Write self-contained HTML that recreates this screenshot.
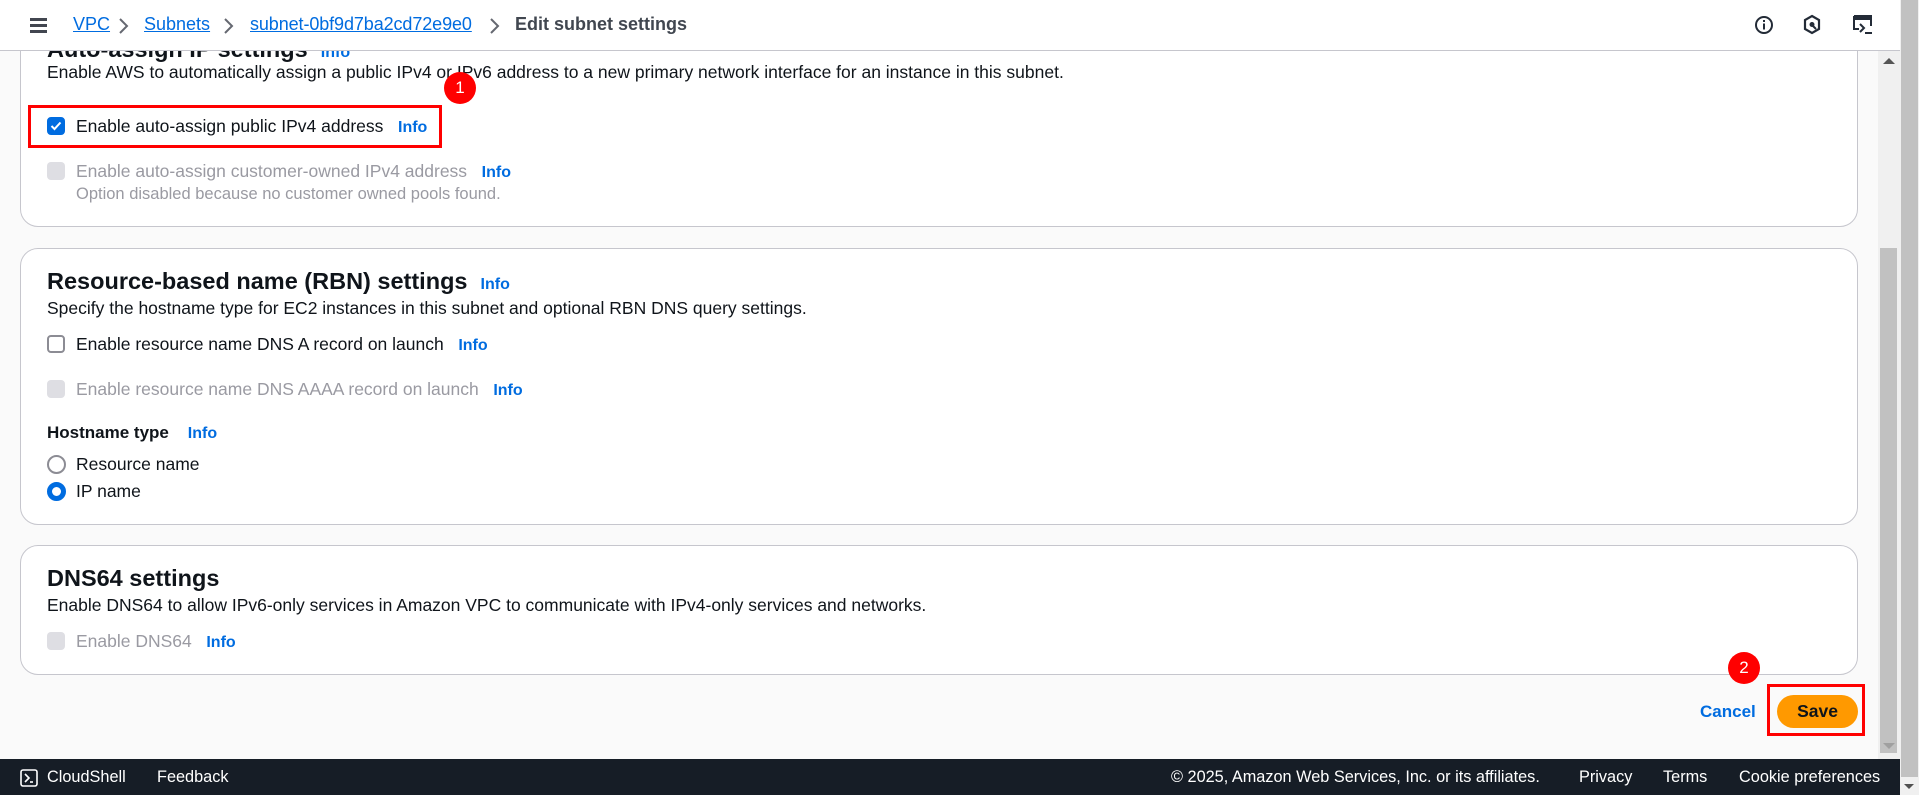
<!DOCTYPE html>
<html><head><meta charset="utf-8"><style>
*{box-sizing:border-box;margin:0;padding:0}
body{width:1919px;height:795px;overflow:hidden;background:#fafafa;font-family:"Liberation Sans",sans-serif;color:#0f141a;position:relative;font-size:17.5px}
.a{position:absolute;white-space:nowrap}
.hdr{position:absolute;left:0;top:0;width:1900px;height:51px;background:#fff;border-bottom:1px solid #c6c6cd;z-index:10}
.card{position:absolute;left:20px;width:1838px;background:#fff;border:1px solid #c6c6cd;border-radius:18px}
.info{color:#006ce0;font-weight:bold;font-size:16px}
.cb{position:absolute;width:18px;height:18px;border:2px solid #8c8c94;border-radius:4px;background:#fff}
.cb.dis{border:none;background:#dedee3}
.dis-t{color:#9a9aa2}
h2{font-size:23.5px;font-weight:bold}
.ft{position:absolute;left:0;top:759px;width:1900px;height:36px;background:#161d26;color:#fff;font-size:16.3px;z-index:10}
.ft .a{top:9px}
.bc{color:#006ce0;text-decoration:underline;font-size:18px;top:14px}
</style></head><body>
<div class="hdr">
 <div class="a" style="left:30px;top:18px;width:17px;height:3px;background:#424650;box-shadow:0 6px 0 #424650,0 12px 0 #424650"></div>
 <div class="a bc" style="left:73px">VPC</div>
 <svg class="a" style="left:117px;top:17px" width="12" height="18" viewBox="0 0 12 18"><path d="M3 2 L10 9 L3 16" fill="none" stroke="#656871" stroke-width="2"/></svg>
 <div class="a bc" style="left:144px">Subnets</div>
 <svg class="a" style="left:222px;top:17px" width="12" height="18" viewBox="0 0 12 18"><path d="M3 2 L10 9 L3 16" fill="none" stroke="#656871" stroke-width="2"/></svg>
 <div class="a bc" style="left:250px;letter-spacing:-0.1px">subnet-0bf9d7ba2cd72e9e0</div>
 <svg class="a" style="left:488px;top:17px" width="12" height="18" viewBox="0 0 12 18"><path d="M3 2 L10 9 L3 16" fill="none" stroke="#656871" stroke-width="2"/></svg>
 <div class="a" style="left:515px;top:14px;font-size:18px;font-weight:bold;color:#414750">Edit subnet settings</div>
 <svg class="a" style="left:1754px;top:15px" width="20" height="20" viewBox="0 0 20 20"><circle cx="10" cy="10" r="8" fill="none" stroke="#232b37" stroke-width="2"/><rect x="9" y="8.5" width="2" height="6" fill="#232b37"/><rect x="9" y="5" width="2" height="2" fill="#232b37"/></svg>
 <svg class="a" style="left:1802px;top:14px" width="20" height="22" viewBox="0 0 20 22"><path d="M10 2 L17 6 V15 L10 19 L3 15 V6 Z" fill="none" stroke="#232b37" stroke-width="2.2"/><circle cx="10" cy="10.5" r="2.5" fill="#232b37"/><path d="M11 12 L14 15" stroke="#232b37" stroke-width="2"/></svg>
 <svg class="a" style="left:1852px;top:14px" width="22" height="22" viewBox="0 0 22 22"><path d="M2 2 H19 V12" fill="none" stroke="#232b37" stroke-width="2"/><path d="M2 2 V15 H7" fill="none" stroke="#232b37" stroke-width="2"/><rect x="2" y="2" width="17" height="4" fill="#232b37"/><path d="M8 10 L12 14 L8 18" fill="none" stroke="#232b37" stroke-width="2"/><rect x="13" y="18" width="7" height="2" fill="#232b37"/></svg>
</div>

<div class="card" style="top:-20px;height:247px"></div>
<div class="a" style="left:47px;top:36px;font-size:23.5px;font-weight:bold">Auto-assign IP settings &nbsp;<span class="info">Info</span></div>
<div class="a" style="left:47px;top:62px">Enable AWS to automatically assign a public IPv4 or IPv6 address to a new primary network interface for an instance in this subnet.</div>
<div class="cb" style="left:47px;top:117px;background:#006ce0;border-color:#006ce0"></div>
<svg class="a" style="left:49px;top:119px" width="14" height="14" viewBox="0 0 14 14"><path d="M2.5 7 L5.5 10 L11.5 3.5" fill="none" stroke="#fff" stroke-width="2"/></svg>
<div class="a" style="left:76px;top:116px">Enable auto-assign public IPv4 address &nbsp;&nbsp;<span class="info">Info</span></div>
<div class="a" style="left:28px;top:105px;width:414px;height:43px;border:3px solid #f00"></div>
<div class="a" style="left:444px;top:72px;width:32px;height:32px;border-radius:50%;background:#f00;color:#fff;text-align:center;line-height:32px;font-size:17px">1</div>
<div class="cb dis" style="left:47px;top:162px"></div>
<div class="a dis-t" style="left:76px;top:161px">Enable auto-assign customer-owned IPv4 address &nbsp;&nbsp;<span class="info">Info</span></div>
<div class="a dis-t" style="left:76px;top:185px;font-size:16.5px">Option disabled because no customer owned pools found.</div>

<div class="card" style="top:248px;height:277px"></div>
<h2 class="a" style="left:47px;top:268px">Resource-based name (RBN) settings &nbsp;<span class="info">Info</span></h2>
<div class="a" style="left:47px;top:298px">Specify the hostname type for EC2 instances in this subnet and optional RBN DNS query settings.</div>
<div class="cb" style="left:47px;top:335px"></div>
<div class="a" style="left:76px;top:334px">Enable resource name DNS A record on launch &nbsp;&nbsp;<span class="info">Info</span></div>
<div class="cb dis" style="left:47px;top:380px"></div>
<div class="a dis-t" style="left:76px;top:379px">Enable resource name DNS AAAA record on launch &nbsp;&nbsp;<span class="info">Info</span></div>
<div class="a" style="left:47px;top:423px;font-weight:bold;font-size:17px">Hostname type &nbsp;&nbsp;&nbsp;<span class="info">Info</span></div>
<div class="a" style="left:47px;top:455px;width:19px;height:19px;border:2px solid #8c8c94;border-radius:50%"></div>
<div class="a" style="left:76px;top:454px">Resource name</div>
<div class="a" style="left:47px;top:482px;width:19px;height:19px;border:5px solid #006ce0;border-radius:50%"></div>
<div class="a" style="left:76px;top:481px">IP name</div>

<div class="card" style="top:545px;height:130px"></div>
<h2 class="a" style="left:47px;top:565px">DNS64 settings</h2>
<div class="a" style="left:47px;top:595px">Enable DNS64 to allow IPv6-only services in Amazon VPC to communicate with IPv4-only services and networks.</div>
<div class="cb dis" style="left:47px;top:632px"></div>
<div class="a dis-t" style="left:76px;top:631px">Enable DNS64 &nbsp;&nbsp;<span class="info">Info</span></div>

<div class="a" style="left:1700px;top:702px;color:#006ce0;font-weight:bold;font-size:17px">Cancel</div>
<div class="a" style="left:1777px;top:695px;width:81px;height:33px;border-radius:17px;background:#ff9900;text-align:center;line-height:33px;font-weight:bold">Save</div>
<div class="a" style="left:1767px;top:684px;width:98px;height:52px;border:3px solid #f00"></div>
<div class="a" style="left:1728px;top:652px;width:32px;height:32px;border-radius:50%;background:#f00;color:#fff;text-align:center;line-height:32px;font-size:17px">2</div>

<div class="ft">
 <svg class="a" style="left:20px;top:10px" width="18" height="18" viewBox="0 0 18 18"><rect x="1" y="1" width="16" height="16" rx="2" fill="none" stroke="#fff" stroke-width="1.6"/><path d="M5 5 L9 9 L5 13" fill="none" stroke="#fff" stroke-width="1.6"/><path d="M10 13 H13" stroke="#fff" stroke-width="1.6"/></svg>
 <div class="a" style="left:47px">CloudShell</div>
 <div class="a" style="left:157px">Feedback</div>
 <div class="a" style="left:1171px">© 2025, Amazon Web Services, Inc. or its affiliates.</div>
 <div class="a" style="left:1579px">Privacy</div>
 <div class="a" style="left:1663px">Terms</div>
 <div class="a" style="left:1739px">Cookie preferences</div>
</div>

<div class="a" style="left:1878px;top:51px;width:22px;height:708px;background:#f0f0f0;z-index:11"></div>
<div class="a" style="left:1880px;top:248px;width:17px;height:505px;background:#c1c1c1;z-index:11"></div>
<div class="a" style="left:1883px;top:58px;width:0;height:0;border-left:6px solid transparent;border-right:6px solid transparent;border-bottom:6px solid #555;z-index:11"></div>
<div class="a" style="left:1883px;top:743px;width:0;height:0;border-left:6px solid transparent;border-right:6px solid transparent;border-top:6px solid #a0a0a0;z-index:11"></div>
<div class="a" style="left:1900px;top:0;width:19px;height:795px;background:#f0f0f0;z-index:11"></div>
<div class="a" style="left:1901px;top:0;width:17px;height:777px;background:#c1c1c1;z-index:11"></div>
<div class="a" style="left:1904px;top:784px;width:0;height:0;border-left:5px solid transparent;border-right:5px solid transparent;border-top:5px solid #505050;z-index:11"></div>
</body></html>
